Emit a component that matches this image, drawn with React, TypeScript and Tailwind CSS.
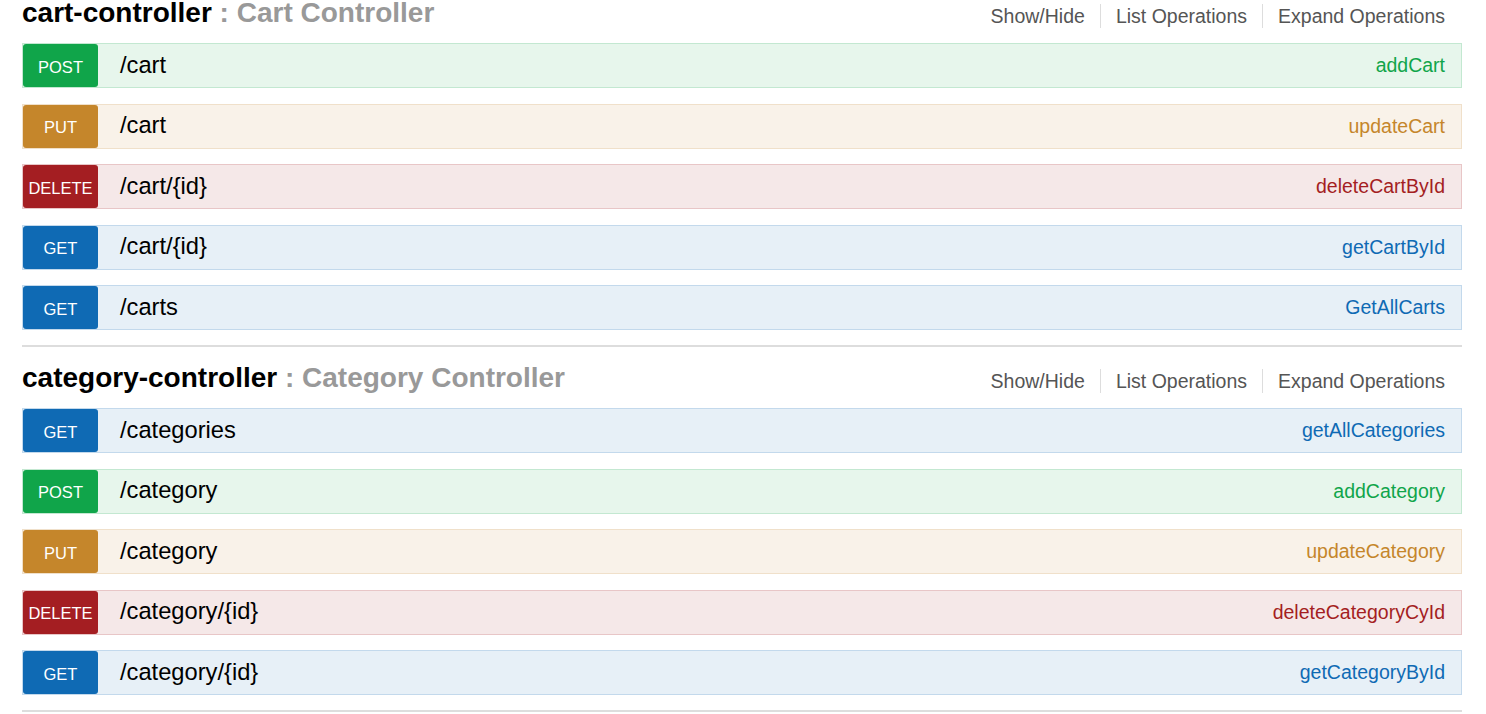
import React from 'react';

type Method = 'GET' | 'POST' | 'PUT' | 'DELETE';

interface Operation {
  method: Method;
  path: string;
  name: string;
}

interface Resource {
  id: string;
  title: string;
  operations: Operation[];
}

// classic swagger-ui 2 palette per verb
const methodStyles: Record<Method, { row: string; badge: string; name: string }> = {
  GET: {
    row: 'bg-[#e7f0f7] border-[#c3d9ec]',
    badge: 'bg-[#0f6ab4]',
    name: 'text-[#0f6ab4]',
  },
  POST: {
    row: 'bg-[#e7f6ec] border-[#c3e8d1]',
    badge: 'bg-[#10a54a]',
    name: 'text-[#10a54a]',
  },
  PUT: {
    row: 'bg-[#f9f2e9] border-[#f0e0ca]',
    badge: 'bg-[#c5862b]',
    name: 'text-[#c5862b]',
  },
  DELETE: {
    row: 'bg-[#f5e8e8] border-[#e8c6c7]',
    badge: 'bg-[#a41e22]',
    name: 'text-[#a41e22]',
  },
};

const resources: Resource[] = [
  {
    id: 'cart-controller',
    title: 'Cart Controller',
    operations: [
      { method: 'POST', path: '/cart', name: 'addCart' },
      { method: 'PUT', path: '/cart', name: 'updateCart' },
      { method: 'DELETE', path: '/cart/{id}', name: 'deleteCartById' },
      { method: 'GET', path: '/cart/{id}', name: 'getCartById' },
      { method: 'GET', path: '/carts', name: 'GetAllCarts' },
    ],
  },
  {
    id: 'category-controller',
    title: 'Category Controller',
    operations: [
      { method: 'GET', path: '/categories', name: 'getAllCategories' },
      { method: 'POST', path: '/category', name: 'addCategory' },
      { method: 'PUT', path: '/category', name: 'updateCategory' },
      { method: 'DELETE', path: '/category/{id}', name: 'deleteCategoryCyId' },
      { method: 'GET', path: '/category/{id}', name: 'getCategoryById' },
    ],
  },
];

const OperationRow: React.FC<{ op: Operation }> = ({ op }) => {
  const s = methodStyles[op.method];
  return (
    <div className={`flex h-[45px] items-center border ${s.row}`}>
      <span
        className={`flex h-full w-[75px] shrink-0 items-center justify-center rounded-[3px] pt-[3px] text-[16.5px] text-white ${s.badge}`}
      >
        {op.method}
      </span>
      <span className="ml-[22px] flex-1 text-[23.7px] text-black">{op.path}</span>
      <span className={`pr-4 pt-[1px] text-[19.5px] ${s.name}`}>{op.name}</span>
    </div>
  );
};

const ResourceSection: React.FC<{ resource: Resource }> = ({ resource }) => {
  const links = ['Show/Hide', 'List Operations', 'Expand Operations'];
  return (
    <section className="border-b-2 border-[#dddddd] pb-[15px]">
      <div className="flex h-[61px] items-center justify-between">
        <h2 className="text-[28px] font-bold leading-none text-black">
          {resource.id}
          <span className="text-[#999999]"> : {resource.title}</span>
        </h2>
        <ul className="mt-[6px] flex items-center pr-[2px]">
          {links.map((l, i) => (
            <li
              key={l}
              className={`px-[15px] text-[19.5px] leading-[24px] text-[#555555] ${
                i < links.length - 1 ? 'border-r border-[#dddddd]' : ''
              }`}
            >
              {l}
            </li>
          ))}
        </ul>
      </div>
      <div className="flex flex-col gap-[15.5px]">
        {resource.operations.map((op) => (
          <OperationRow key={op.method + op.path} op={op} />
        ))}
      </div>
    </section>
  );
};

export default function App() {
  return (
    <div
      className="min-h-screen overflow-hidden bg-white"
      style={{ fontFamily: '"Liberation Sans", Arial, sans-serif' }}
    >
      <div className="-mt-[18px] ml-[22px] w-[1440px]">
        {resources.map((r) => (
          <ResourceSection key={r.id} resource={r} />
        ))}
      </div>
    </div>
  );
}
